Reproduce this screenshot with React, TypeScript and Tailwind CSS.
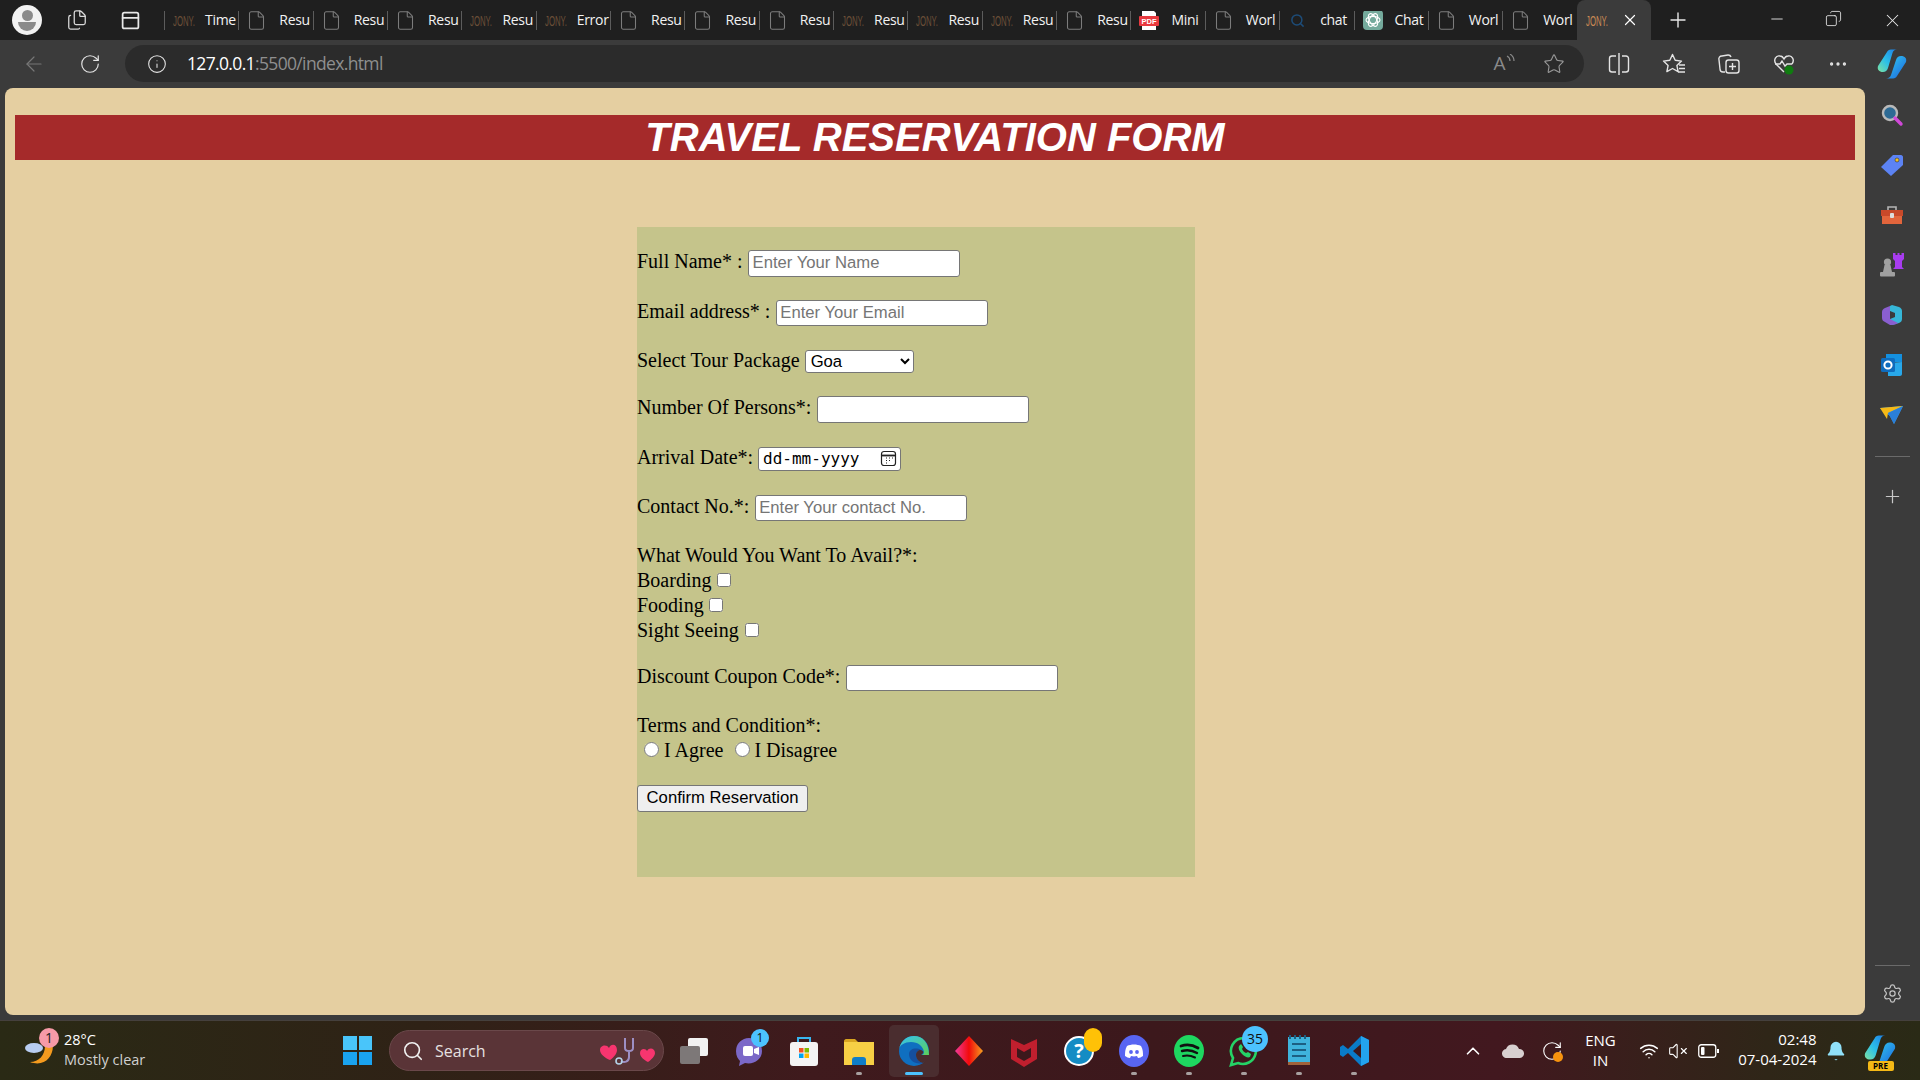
import React from 'react';
import {
  ArrowLeft, RotateCw, Info, Star, Plus, X, Minus, MoreHorizontal, Search, Settings,
  ChevronUp, Wifi, VolumeX, Bell, Files, PanelTop, File, Copy,
} from 'lucide-react';

const uiFont = "font-['Open_Sans',sans-serif]";

const JonyLogo = ({ active = false }: { active?: boolean }) => (
  <span className={`w-[20px] text-[15px] leading-none scale-x-[0.52] origin-left whitespace-nowrap font-['Liberation_Sans',sans-serif] ${active ? 'text-[#c98a55]' : 'text-[#6b4f38]'}`}>JONY.</span>
);

const PdfIcon = () => (
  <svg width="20" height="22" viewBox="0 0 20 22">
    <path d="M3 0h10l4 4v18H3z" fill="#fff" />
    <rect x="0" y="7" width="20" height="10" rx="1" fill="#e8393f" />
    <text x="10" y="15" fontSize="7.5" fontWeight="700" fill="#fff" textAnchor="middle" fontFamily="Liberation Sans">PDF</text>
  </svg>
);

const GptIcon = () => (
  <svg width="20" height="20" viewBox="0 0 20 20">
    <rect width="20" height="20" rx="4" fill="#74aa9c" />
    <g fill="none" stroke="#fff" strokeWidth="1.1">
      <ellipse cx="10" cy="10" rx="7" ry="3.6" />
      <ellipse cx="10" cy="10" rx="7" ry="3.6" transform="rotate(60 10 10)" />
      <ellipse cx="10" cy="10" rx="7" ry="3.6" transform="rotate(120 10 10)" />
    </g>
  </svg>
);

const CopilotIcon = ({ size = 28, id = 'cop' }: { size?: number; id?: string }) => (
  <svg width={size} height={size} viewBox="0 0 30 30">
    <defs>
      <linearGradient id={`${id}A`} x1="0" y1="0" x2="1" y2="1">
        <stop offset="0" stopColor="#33d0ee" />
        <stop offset="1" stopColor="#1b63e0" />
      </linearGradient>
      <linearGradient id={`${id}B`} x1="0" y1="1" x2="1" y2="0">
        <stop offset="0" stopColor="#7fe3a0" />
        <stop offset="0.45" stopColor="#2cc0e8" />
        <stop offset="1" stopColor="#1c7ee8" />
      </linearGradient>
    </defs>
    <path d="M10 3c.8-1.600 2-2.500 4-2.500h6c-2.500 0-3.800 1.500-4.500 3.500L11 19c-.8 2.500-2.500 4-5 4-4 0-6-2.500-5-6z" fill={`url(#${id}B)`} />
    <path d="M20 27c-.8 1.600-2 2.500-4 2.500H9c2.500 0 4.300-1.500 5-3.500l5-15c.8-2.500 2.500-4 5-4 4 0 6 2.500 5 6z" fill={`url(#${id}A)`} />
  </svg>
);

const SidebarIcons = [
  <svg key="s" width="24" height="24" viewBox="0 0 24 24">
    <circle cx="10" cy="10" r="7" fill="#2d6a94" stroke="#b9b9b9" strokeWidth="2.4" />
    <path d="M15 15l6 6" stroke="#d048d8" strokeWidth="3.4" strokeLinecap="round" />
  </svg>,
  <svg key="t" width="24" height="24" viewBox="0 0 24 24">
    <path d="M1 14L13 2h8c1 0 2 1 2 2v8L11 23z" fill="#5c83f4" />
    <circle cx="17" cy="7" r="2" fill="#f0c020" stroke="#333" strokeWidth="0.6" />
  </svg>,
  <svg key="b" width="24" height="22" viewBox="0 0 24 22">
    <path d="M8 6V3h8v3" fill="none" stroke="#b5b5b5" strokeWidth="1.6" />
    <rect x="1" y="6" width="22" height="6" fill="#c8492a" />
    <rect x="2" y="12" width="20" height="8" fill="#e2653c" />
    <rect x="10" y="9" width="4" height="5" rx="1" fill="#ddd" />
  </svg>,
  <svg key="c" width="24" height="24" viewBox="0 0 24 24">
    <circle cx="7.500" cy="9" r="3.600" fill="#a0a0a0" />
    <path d="M4.500 12h6l1.500 7H3z" fill="#a0a0a0" />
    <rect x="0" y="19" width="15" height="4.500" rx="1" fill="#a0a0a0" />
    <path d="M13 0h2.500v2h2V0h2v2h2V0H24v6l-2 2v6l2 2H13l2-2V8l-2-2z" fill="#a83cf0" />
  </svg>,
  <svg key="o" width="24" height="24" viewBox="0 0 24 24">
    <path d="M12 2l7 2c2 1 3 2 3 4v8c0 2-1 3-3 4l-7 2-2-1V16l5-2v-4l-5-2V3z" fill="#36b7d8" />
    <path d="M10 3L5 5C3 6 2 7 2 9v6c0 2 1 3 3 4l5 3c2 0 5 0 8-2l-8-4V8z" fill="#8a5fd0" />
  </svg>,
  <svg key="u" width="24" height="24" viewBox="0 0 24 24">
    <rect x="6" y="1" width="16" height="8" fill="#1490df" />
    <path d="M8 10l14-1v12c0 1-1 2-2 2H8z" fill="#28a8ea" />
    <rect x="1" y="5" width="14" height="14" rx="1.5" fill="#0f6cbd" />
    <circle cx="8" cy="12" r="3.6" fill="none" stroke="#fff" strokeWidth="2" />
  </svg>,
  <svg key="p" width="24" height="20" viewBox="0 0 24 20">
    <path d="M0 3l23-2-9 18-4-8z" fill="#3aa0ee" />
    <path d="M0 3l23-2L8 8l-1 6z" fill="#f5b916" />
    <path d="M23 1L8 8l6 11z" fill="#2a7fd8" />
  </svg>,
];

const tabs: { icon: 'jony' | 'file' | 'pdf' | 'find' | 'gpt'; label: string }[] = [
  { icon: 'jony', label: 'Time' },
  { icon: 'file', label: 'Resu' },
  { icon: 'file', label: 'Resu' },
  { icon: 'file', label: 'Resu' },
  { icon: 'jony', label: 'Resu' },
  { icon: 'jony', label: 'Error' },
  { icon: 'file', label: 'Resu' },
  { icon: 'file', label: 'Resu' },
  { icon: 'file', label: 'Resu' },
  { icon: 'jony', label: 'Resu' },
  { icon: 'jony', label: 'Resu' },
  { icon: 'jony', label: 'Resu' },
  { icon: 'file', label: 'Resu' },
  { icon: 'pdf', label: 'Mini' },
  { icon: 'file', label: 'Worl' },
  { icon: 'find', label: 'chat' },
  { icon: 'gpt', label: 'Chat' },
  { icon: 'file', label: 'Worl' },
  { icon: 'file', label: 'Worl' },
];

const Tab = ({ icon, label }: { icon: string; label: string }) => (
  <div className="w-[74.35px] h-[19px] shrink-0 flex items-center border-l border-[#5c5c5c] pl-[8px] overflow-hidden">
    <div className="w-[32px] shrink-0 flex items-center">
      {icon === 'jony' && <JonyLogo />}
      {icon === 'file' && <File size={21} strokeWidth={1.2} className="text-[#7c7c7c] -ml-[1px]" />}
      {icon === 'pdf' && <PdfIcon />}
      {icon === 'find' && <Search size={15} strokeWidth={2.4} className="text-[#1d4c78] ml-[2px]" />}
      {icon === 'gpt' && <GptIcon />}
    </div>
    <span className="text-[14px] leading-none -tracking-[0.3px] text-[#f2f2f2] whitespace-nowrap">{label}</span>
  </div>
);

const TaskIcon = ({ children, dot = false, active = false }: { children: React.ReactNode; dot?: boolean; active?: boolean }) => (
  <div className="w-[55px] h-[52px] shrink-0 flex justify-center">
    <div className={`w-[50px] h-full flex flex-col items-center justify-end ${active ? 'bg-[#4a2d2f] rounded-[5px]' : ''}`}>
      <div className="h-[32px] flex items-center justify-center">{children}</div>
      <div className={`mt-[5px] mb-[2px] h-[3px] rounded-full ${active ? 'w-[18px] bg-[#4cc2ff]' : dot ? 'w-[6px] bg-[#a8a0a0]' : 'w-[6px] bg-transparent'}`} />
    </div>
  </div>
);

const App = () => {
  return (
    <div className={`w-[1920px] h-screen flex flex-col overflow-hidden bg-[#3b3b3b] ${uiFont}`}>
      {/* Tab strip */}
      <div className="h-[40px] shrink-0 bg-[#1f1f1f] flex items-center">
        <div className="w-[54px] flex justify-center">
          <div className="w-[30px] h-[30px] rounded-full bg-[#f2f2f2] flex flex-col items-center justify-center gap-[1px]">
            <div className="w-[11px] h-[11px] rounded-full bg-[#8a8a8a]" />
            <div className="w-[18px] h-[9px] rounded-b-full rounded-t-[4px] bg-[#8a8a8a]" />
          </div>
        </div>
        <div className="w-[46px] flex justify-center"><Files size={22} strokeWidth={1.4} className="text-[#d8d8d8]" /></div>
        <div className="w-[60px] flex justify-center"><PanelTop size={21} strokeWidth={2} className="text-[#e8e8e8]" /></div>
        <div className="w-[4px] shrink-0" />
        {tabs.map((t, i) => <Tab key={i} icon={t.icon} label={t.label} />)}
        <div className="w-[74px] h-[40px] shrink-0 bg-[#3b3b3b] rounded-t-[8px] flex items-center pl-[9px] justify-between pr-[12px]">
          <JonyLogo active />
          <X size={18} strokeWidth={1.6} className="text-white" />
        </div>
        <div className="w-[54px] flex justify-center"><Plus size={24} strokeWidth={1.4} className="text-[#e8e8e8]" /></div>
        <div className="flex-1 flex justify-end text-[#e8e8e8]">
          <div className="w-[57px] flex justify-center -translate-x-[2px]"><Minus size={18} strokeWidth={1.2} /></div>
          <div className="w-[57px] flex justify-center -translate-x-[2px]"><Copy size={17} strokeWidth={1.2} className="-scale-x-100" /></div>
          <div className="w-[56px] flex justify-center"><X size={21} strokeWidth={1.2} /></div>
        </div>
      </div>

      {/* Toolbar */}
      <div className="h-[48px] shrink-0 flex items-center pb-[1px]">
        <div className="w-[62px] flex justify-center pl-[6px]"><ArrowLeft size={24} strokeWidth={1.2} className="text-[#777]" /></div>
        <div className="w-[56px] flex justify-center"><RotateCw size={22} strokeWidth={1.3} className="text-[#e4e4e4]" /></div>
        <div className="w-[1459px] h-[37px] ml-[7px] rounded-full bg-[#2b2b2b] flex items-center">
          <div className="w-[62px] flex justify-center pl-[2px]"><Info size={20} strokeWidth={1.3} className="text-[#e4e4e4]" /></div>
          <div className="text-[17.5px] leading-none -tracking-[0.65px] text-[#8f8f8f]"><span className="text-white">127.0.0.1</span>:5500/index.html</div>
          <div className="ml-auto w-[50px] flex justify-center items-start text-[#8a8a8a] text-[19px] leading-none">
            A
            <svg width="9" height="12" viewBox="0 0 9 12" fill="none" stroke="#8a8a8a" strokeWidth="1.200">
              <path d="M1 2c2 1 3 3 3 5M4 0c3 2 4 4 4 7" />
            </svg>
          </div>
          <div className="w-[50px] mr-[5px] flex justify-center"><Star size={22} strokeWidth={1.2} className="text-[#9a9a9a]" /></div>
        </div>
        <div className="w-[55px] ml-[7px] flex justify-center">
          <svg width="24" height="24" viewBox="0 0 24 24" fill="none" stroke="#e4e4e4" strokeWidth="1.400">
            <path d="M9 4H5a2.500 2.500 0 0 0-2.500 2.500v11A2.500 2.500 0 0 0 5 20h4M15 4h4a2.500 2.500 0 0 1 2.500 2.500v11A2.500 2.500 0 0 1 19 20h-4M12 1v22" />
          </svg>
        </div>
        <div className="w-[55px] flex justify-center">
          <svg width="24" height="24" viewBox="0 0 24 24" fill="none" stroke="#e4e4e4" strokeWidth="1.400" strokeLinejoin="round">
            <path d="M10.500 2.500l2.700 5.800 6.300.8-4.600 4.300 1.200 6.200-5.600-3.100-5.600 3.100 1.200-6.200L1.500 9.100l6.300-.8z" />
            <path d="M17 13h6M17 16.500h6M16 20h7" />
          </svg>
        </div>
        <div className="w-[55px] flex justify-center">
          <svg width="24" height="24" viewBox="0 0 24 24" fill="none" stroke="#e4e4e4" strokeWidth="1.400">
            <path d="M8 20H6a3 3 0 0 1-3-3L2 8a3 3 0 0 1 3-4l6-1a3 3 0 0 1 3 2" />
            <rect x="9" y="8" width="13" height="13" rx="2.500" />
            <path d="M15.500 11v7M12 14.500h7" />
          </svg>
        </div>
        <div className="w-[55px] flex justify-center">
          <svg width="24" height="24" viewBox="0 0 24 24" fill="none" stroke="#e4e4e4" strokeWidth="1.400">
            <path d="M12 20L4 12C1 8 4 3 8 4c2 0 3 1 4 3 1-2 2-3 4-3 4-1 7 4 4 8" />
            <path d="M3 12h5l2-3 3 5 2-2h5" />
            <circle cx="17" cy="18" r="4.500" fill="#107c10" stroke="none" />
          </svg>
        </div>
        <div className="w-[53px] flex justify-center"><MoreHorizontal size={22} strokeWidth={1.6} className="text-[#e4e4e4]" /></div>
        <div className="w-[56px] flex justify-center"><CopilotIcon size={30} id="copTop" /></div>
      </div>

      {/* Page + sidebar */}
      <div className="flex-1 min-h-0 flex pl-[5px]">
        <main className="w-[1860px] h-full bg-[#e5cfa1] rounded-[8px] px-[10px] font-['Liberation_Serif',serif] text-[20px] leading-[normal] text-black overflow-hidden">
          <h1 className="mt-[27px] bg-[#a52a2a] text-white text-center text-[40px] leading-[45px] font-bold italic font-['Liberation_Sans',sans-serif]">TRAVEL RESERVATION FORM</h1>
          <form className="ml-[622px] mt-[67px] w-[558px] h-[650px] bg-[#c5c48b]">
            <br />
            <label>Full Name* : </label>
            <input type="text" placeholder="Enter Your Name" className="w-[212px] h-[27px] pl-[4px] pr-[3px] pb-[1px] bg-white border border-[#767676] rounded-[3px] text-[16.67px] font-['Liberation_Sans',sans-serif] placeholder:text-[#757575]" />
            <br /><br />
            <label>Email address* : </label>
            <input type="text" placeholder="Enter Your Email" className="w-[212px] h-[26px] ml-[1px] pl-[3px] pr-[3px] bg-white border border-[#767676] rounded-[3px] text-[16.67px] font-['Liberation_Sans',sans-serif] placeholder:text-[#757575]" />
            <br /><br />
            <label>Select Tour Package </label>
            <select className="w-[109px] h-[23px] pl-[1px] bg-white border border-[#767676] rounded-[3px] text-[16.67px] font-['Liberation_Sans',sans-serif]">
              <option>Goa</option>
            </select>
            <br /><br />
            <label>Number Of Persons*: </label>
            <input type="number" className="w-[212px] h-[27px] ml-[1px] px-[3px] pb-[1px] bg-white border border-[#767676] rounded-[3px] text-[16.67px] font-['Liberation_Sans',sans-serif]" />
            <br /><br />
            <label>Arrival Date*: </label>
            <span className="inline-flex items-center justify-between w-[143px] h-[24px] pl-[4px] pr-[3px] bg-white border border-[#767676] rounded-[3px] text-[16px] font-['DejaVu_Sans_Mono',monospace]">
              <span>dd-mm-yyyy</span>
              <svg width="17" height="17" viewBox="0 0 17 17" fill="none" stroke="#222" strokeWidth="1.2">
                <rect x="1.500" y="1.500" width="14" height="14" rx="2.500" />
                <path d="M1.500 5.500h14" strokeWidth="1.800" />
                <path d="M6 8h1M9 8h1M12 8h1M6 10.500h1M9 10.500h1M6 13h1" />
              </svg>
            </span>
            <br /><br />
            <label>Contact No.*: </label>
            <input type="text" placeholder="Enter Your contact No." className="w-[212px] h-[26px] mt-[1px] ml-[1px] pl-[3px] pr-[3px] bg-white border border-[#767676] rounded-[3px] text-[16.67px] font-['Liberation_Sans',sans-serif] placeholder:text-[#757575]" />
            <br /><br />
            <label>What Would You Want To Avail?*:</label>
            <div className="h-[25px] pt-[2px]">
              <label>Boarding</label><input type="checkbox" className="w-[14px] h-[14px] ml-[6px]" />
            </div>
            <div className="h-[25px] pt-[2px]">
              <label>Fooding</label><input type="checkbox" className="w-[14px] h-[14px] ml-[5px]" />
            </div>
            <div className="h-[25px] pt-[2px]">
              <label>Sight Seeing</label><input type="checkbox" className="w-[14px] h-[14px] ml-[6px]" />
            </div>
            <br />
            <label>Discount Coupon Code*: </label>
            <input type="text" className="w-[212px] h-[26px] ml-[1px] px-[3px] bg-white border border-[#767676] rounded-[3px] text-[16.67px] font-['Liberation_Sans',sans-serif]" />
            <br /><br />
            <label>Terms and Condition*:</label>
            <div className="h-[25px] pt-[2px]">
              <input type="radio" name="terms" className="w-[15px] h-[15px] ml-[7px] mr-[5px]" /><label>I Agree</label>
              <input type="radio" name="terms" className="w-[15px] h-[15px] ml-[12px] mr-[4px]" /><label>I Disagree</label>
            </div>
            <br />
            <button type="button" className="w-[171px] h-[27px] bg-[#efefef] border border-[#767676] rounded-[3px] text-[16.67px] font-['Liberation_Sans',sans-serif] text-black">Confirm Reservation</button>
          </form>
        </main>
        <aside className="w-[55px] h-full flex flex-col items-center pt-[2px] pb-[11px]">
          {SidebarIcons.map((icon) => (
            <div key={icon.key} className="h-[50px] w-full flex items-center justify-center shrink-0 -translate-x-[1px]">{icon}</div>
          ))}
          <div className="w-[35px] h-px bg-[#6a6a6a] mt-[16px]" />
          <div className="mt-[29px] text-[#c8c8c8]"><Plus size={21} strokeWidth={1.4} /></div>
          <div className="mt-auto w-[35px] h-px bg-[#6a6a6a]" />
          <div className="mt-[17px] text-[#c4c4c4]"><Settings size={21} strokeWidth={1.4} /></div>
        </aside>
      </div>

      {/* Taskbar */}
      <div className="mt-[5px] h-[60px] shrink-0 border-t border-[#45403d] bg-[linear-gradient(90deg,#2a2a15_0%,#2f2216_22%,#3f1a1d_42%,#3c181c_60%,#42181f_78%,#2f2618_92%,#2a2a16_100%)] flex items-center text-white">
        <div className="w-[330px] pl-[25px] flex items-center shrink-0">
          <div className="relative w-[30px] h-[34px] mr-[9px]">
            <svg width="30" height="34" viewBox="0 0 30 34">
              <path d="M27 6c4 14-6 28-22 22 9 0 15-7 15-16z" fill="#f49a1e" />
              <ellipse cx="9" cy="14" rx="9" ry="5" fill="#b8cdf2" />
            </svg>
            <span className="absolute -top-[6px] left-[14px] w-[20px] h-[20px] rounded-full bg-[#f79aa8] text-[14px] leading-[20px] text-center text-[#222]">1</span>
          </div>
          <div className="text-[14.5px] leading-[20px] -mt-[2px]">
            <div>28°C</div>
            <div className="text-[#d0d0d0]">Mostly clear</div>
          </div>
        </div>
        <div className="w-[55px] shrink-0 flex justify-center">
          <div className="w-[29px] h-[29px] grid grid-cols-2 gap-[2px]">
            <div className="bg-[#49c5fa]" /><div className="bg-[#49c5fa]" />
            <div className="bg-[#1aa3f0]" /><div className="bg-[#1aa3f0]" />
          </div>
        </div>
        <div className="w-[275px] h-[41px] ml-[4px] shrink-0 rounded-full bg-[#5a3437] border border-[#6a484a] flex items-center pl-[12px] pr-[6px]">
          <Search size={22} strokeWidth={1.8} className="text-[#f0f0f0]" />
          <span className="ml-[11px] text-[16px] text-[#e6e0e0]">Search</span>
          <svg className="ml-auto" width="60" height="34" viewBox="0 0 60 34" fill="none">
            <path d="M12 14c2-5 8-4 8 2 0 4-4 8-7 10-5-2-10-6-10-10 0-5 7-6 9-2z" fill="#f7356f" />
            <path d="M50 17c2-4 8-3 8 2 0 3-4 7-7 9-4-2-8-5-8-9 0-5 6-5 7-2z" fill="#f7356f" />
            <path d="M28 4v10c0 4 8 4 8 0V4" stroke="#9d8fc4" strokeWidth="2" />
            <path d="M32 18v5c0 5-5 6-8 4" stroke="#9d8fc4" strokeWidth="2" />
            <circle cx="22" cy="27" r="3" stroke="#b4d3e8" strokeWidth="1.6" />
          </svg>
        </div>
        <div className="flex items-center ml-[2.500px] shrink-0">
          <TaskIcon>
            <div className="relative w-[28px] h-[26px]">
              <div className="absolute right-0 top-0 w-[20px] h-[18px] rounded-[2px] bg-[#f2f2f2]" />
              <div className="absolute left-0 bottom-0 w-[20px] h-[18px] rounded-[2px] bg-[#7d7878]" />
            </div>
          </TaskIcon>
          <TaskIcon>
            <div className="relative">
              <svg width="30" height="32" viewBox="0 0 30 32">
                <path d="M15 3a13 13 0 0 0-13 13c0 5 2 8 4 10l-1 5 6-3c8 2 17-3 17-12A13 13 0 0 0 15 3z" fill="#7b68c8" />
                <rect x="9" y="11" width="10" height="10" rx="2" fill="#fff" />
                <path d="M20 14l5-2v8l-5-2z" fill="#fff" />
              </svg>
              <span className="absolute -top-[6px] -right-[5px] min-w-[18px] h-[18px] rounded-full bg-[#4cc2ff] text-[12px] leading-[18px] text-center text-[#111]">1</span>
            </div>
          </TaskIcon>
          <TaskIcon>
            <svg width="30" height="32" viewBox="0 0 30 32">
              <path d="M9 8V3h12v5" fill="none" stroke="#38b6f0" strokeWidth="2" />
              <rect x="1" y="7" width="28" height="24" rx="3" fill="#f4f4f4" />
              <rect x="10" y="13" width="4.500" height="4.500" fill="#f25022" />
              <rect x="15.500" y="13" width="4.500" height="4.500" fill="#7fba00" />
              <rect x="10" y="18.500" width="4.500" height="4.500" fill="#00a4ef" />
              <rect x="15.500" y="18.500" width="4.500" height="4.500" fill="#ffb900" />
            </svg>
          </TaskIcon>
          <TaskIcon dot>
            <svg width="30" height="30" viewBox="0 0 30 30">
              <path d="M0 5c0-1 1-2 2-2h9l3 3h-14z" fill="#d9a520" />
              <rect x="0" y="6" width="30" height="23" fill="#f7cf45" />
              <path d="M8 24c0-2 1-3 3-3h8c2 0 3 1 3 3v5H8z" fill="#0f7dc8" />
            </svg>
          </TaskIcon>
          <TaskIcon active>
            <svg width="30" height="32" viewBox="0 0 30 32">
              <defs>
                <linearGradient id="edgeA" x1="0" y1="0" x2="1" y2="1">
                  <stop offset="0" stopColor="#35c1f1" />
                  <stop offset="1" stopColor="#5cd05a" />
                </linearGradient>
              </defs>
              <circle cx="15" cy="16" r="15" fill="#0f6fc0" />
              <path d="M15 1C7 1 1 7 0 15c0-5 6-8 12-8 7 0 12 4 13 10 0 2-1 3-3 3h8c0-12-6-19-15-19z" fill="url(#edgeA)" />
              <path d="M10 19c0 7 7 11 14 9-4-1-7-4-7-8 0-3 2-5 5-5-5-3-12-1-12 4z" fill="#154f9e" />
              <path d="M22 20h8c0 3-2 6-6 8-4-1-7-4-7-8 0-3 2-5 5-5 3 1 3 3 0 5z" fill="#4a2d2f" />
            </svg>
          </TaskIcon>
          <TaskIcon>
            <svg width="30" height="32" viewBox="0 0 30 32">
              <defs>
                <linearGradient id="diaA" x1="0" y1="0" x2="1" y2="0">
                  <stop offset="0" stopColor="#f23a9a" />
                  <stop offset="0.5" stopColor="#f20a0a" />
                  <stop offset="1" stopColor="#f7a020" />
                </linearGradient>
              </defs>
              <path d="M15 1l14 15-14 15L1 16z" fill="url(#diaA)" />
            </svg>
          </TaskIcon>
          <TaskIcon>
            <svg width="28" height="32" viewBox="0 0 28 32">
              <path d="M1 4l13 6 13-6v20l-13 8-13-8z" fill="#c01f2e" />
              <path d="M7 13l7 4 7-4v9l-7 4-7-4z" fill="#3d181c" />
            </svg>
          </TaskIcon>
          <TaskIcon>
            <div className="relative">
              <div className="w-[30px] h-[30px] rounded-full bg-[#148cc4] border-2 border-white text-[20px] leading-[26px] font-bold text-center text-white">?</div>
              <span className="absolute -top-[8px] -right-[8px] w-[18px] h-[24px] rounded-full bg-[#ffc107]" />
            </div>
          </TaskIcon>
          <TaskIcon dot>
            <svg width="30" height="32" viewBox="0 0 30 32">
              <ellipse cx="15" cy="16" rx="15" ry="16" fill="#5865f2" />
              <path d="M8 11c4-2 10-2 14 0 2 3 2 7 2 10-2 1-3 2-5 2l-1-2c-2 .5-4 .5-6 0l-1 2c-2 0-3-1-5-2 0-3 0-7 2-10z" fill="#fff" />
              <circle cx="12" cy="17" r="1.900" fill="#5865f2" />
              <circle cx="18" cy="17" r="1.900" fill="#5865f2" />
            </svg>
          </TaskIcon>
          <TaskIcon dot>
            <svg width="30" height="32" viewBox="0 0 30 32" fill="none">
              <ellipse cx="15" cy="16" rx="15" ry="16" fill="#1ed760" />
              <path d="M7 11c6-2 12-1 17 2" stroke="#111" strokeWidth="2.800" strokeLinecap="round" />
              <path d="M8 16c5-1.500 10-1 15 2" stroke="#111" strokeWidth="2.400" strokeLinecap="round" />
              <path d="M9 21c4-1 8-.5 12 1.500" stroke="#111" strokeWidth="2" strokeLinecap="round" />
            </svg>
          </TaskIcon>
          <TaskIcon dot>
            <div className="relative">
              <svg width="30" height="32" viewBox="0 0 30 32" fill="none">
                <path d="M15 3a13 13 0 0 0-11 20L2 30l7-2a13 13 0 1 0 6-25z" stroke="#25d366" strokeWidth="2.600" />
                <path d="M10 11c-1 2 0 5 3 8s6 4 8 3l1-3-3-2-2 1c-2-1-3-2-4-4l1-2-2-3z" fill="#25d366" />
              </svg>
              <span className="absolute -top-[9px] -right-[9px] w-[26px] h-[26px] rounded-full bg-[#4cc2ff] text-[14px] leading-[26px] text-center text-[#111]">35</span>
            </div>
          </TaskIcon>
          <TaskIcon dot>
            <svg width="22" height="32" viewBox="0 0 22 32">
              <rect x="0" y="2" width="22" height="26" fill="#3fb3dc" />
              <rect x="0" y="27" width="22" height="3" fill="#a0623a" />
              <path d="M4 9h14M4 15h14M4 21h14" stroke="#1c5f82" strokeWidth="2" />
              <path d="M2 0v4M7 0v4M12 0v4M17 0v4" stroke="#1c5f82" strokeWidth="2" />
            </svg>
          </TaskIcon>
          <TaskIcon dot>
            <svg width="31" height="32" viewBox="0 0 31 32">
              <path d="M22 1l8 4v22l-8 4-13-13-5 4-3-2v-8l3-2 5 4z" fill="#0a7bc8" />
              <path d="M22 1l8 4v22l-8 4z" fill="#23a3ee" />
              <path d="M22 9l-8 7 8 7z" fill="#3d181c" />
            </svg>
          </TaskIcon>
        </div>
        <div className="flex items-center ml-[71px] shrink-0 text-white">
          <div className="w-[40px] flex justify-center"><ChevronUp size={22} strokeWidth={1.8} /></div>
          <div className="w-[40px] flex justify-center">
            <svg width="22" height="14" viewBox="0 0 22 14">
              <path d="M5 14a4.500 4.500 0 0 1-1-9 7 7 0 0 1 13 0 4.500 4.500 0 0 1 1 9z" fill="#d8d0d0" />
            </svg>
          </div>
          <div className="w-[40px] flex justify-center -translate-x-[1px]">
            <div className="relative">
              <RotateCw size={22} strokeWidth={1.2} />
              <span className="absolute right-[0px] bottom-[0px] w-[10px] h-[10px] rounded-full bg-[#f7930e]" />
            </div>
          </div>
          <div className="w-[56px] text-center text-[15px] leading-[20px] -mt-[2px]">ENG<br />IN</div>
          <div className="w-[28px] ml-[6px] flex justify-center"><Wifi size={20} strokeWidth={1.8} /></div>
          <div className="w-[30px] flex justify-center"><VolumeX size={20} strokeWidth={1.3} /></div>
          <div className="w-[30px] flex justify-center translate-x-[1px]">
            <svg width="21" height="14" viewBox="0 0 21 14" fill="none">
              <rect x=".75" y=".75" width="17" height="12.500" rx="2.500" stroke="#fff" strokeWidth="1.300" />
              <rect x="3" y="3" width="3.500" height="8" rx="1" fill="#fff" />
              <rect x="19" y="5" width="2" height="4" fill="#fff" />
            </svg>
          </div>
          <div className="w-[94px] text-right text-[15px] leading-[20px] -mt-[3px]">
            <div>02:48</div>
            <div>07-04-2024</div>
          </div>
          <div className="w-[38px] flex justify-center"><Bell size={22} strokeWidth={0} fill="#90e0f8" /></div>
          <div className="relative w-[34px] ml-[9px]">
            <CopilotIcon size={32} id="copTray" />
            <span className="absolute -bottom-[4px] left-[4px] w-[26px] h-[10px] rounded-[2px] bg-[#f5b916] text-[8px] leading-[10px] text-center font-bold text-black">PRE</span>
          </div>
        </div>
      </div>
    </div>
  );
};

export default App;
